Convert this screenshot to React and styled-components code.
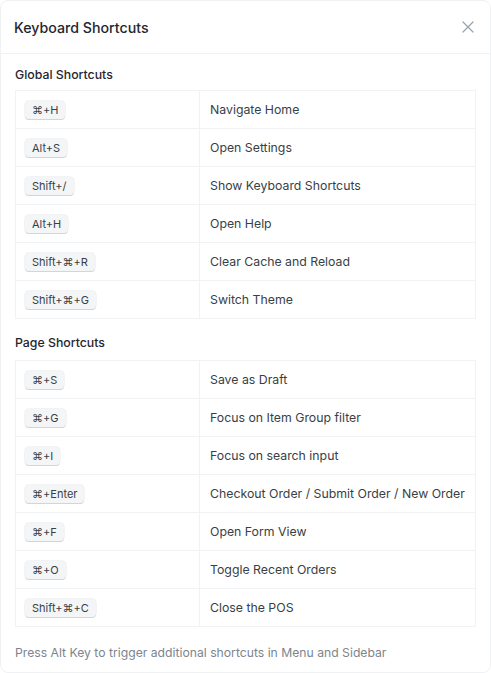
import React from "react";
import styled, { createGlobalStyle } from "styled-components";

const Global = createGlobalStyle`
  body {
    margin: 0;
    background: #ffffff;
    font-family: Inter, "Noto Sans", sans-serif;
    -webkit-font-smoothing: antialiased;
  }
`;

const Modal = styled.div`
  width: 491px;
  height: 673px;
  box-sizing: border-box;
  background: #fff;
  border: 1px solid #f0f1f2;
  border-radius: 8px;
  display: flex;
  flex-direction: column;
`;

const Header = styled.div`
  height: 52px;
  display: flex;
  align-items: center;
  justify-content: space-between;
  padding: 0 14px 0 13px;
  border-bottom: 1px solid #f1f2f3;
`;

const Title = styled.h3`
  margin: 0;
  font-size: 14.2px;
  font-weight: 500;
  color: #1f272e;
`;

const Close = styled.button`
  border: none;
  background: none;
  padding: 0;
  width: 16px;
  height: 16px;
  display: flex;
  align-items: center;
  justify-content: center;
  color: #98a1a9;
  cursor: pointer;
`;

const Body = styled.div`
  padding: 12px 14px 0 14px;
  display: flex;
  flex-direction: column;
`;

const SectionTitle = styled.div`
  font-size: 12.3px;
  font-weight: 500;
  color: #1f272e;
  line-height: 18px;
  margin-bottom: ${(p) => p.gap || 6}px;
  margin-top: ${(p) => p.top || 0}px;
`;

const Table = styled.div`
  border: 1px solid #f1f2f3;
  border-bottom: none;
`;

const Row = styled.div`
  display: grid;
  grid-template-columns: 184px 1fr;
  height: 37px;
  border-bottom: 1px solid #f1f2f3;
`;

const KeyCell = styled.div`
  display: flex;
  align-items: center;
  padding-left: 9px;
  border-right: 1px solid #f1f2f3;
`;

const Kbd = styled.kbd`
  font-family: Inter, "Noto Sans", sans-serif;
  font-size: 11px;
  color: #383f45;
  background: #f4f5f6;
  border-radius: 4px;
  padding: 0 7px;
  height: 18px;
  line-height: 18px;
  box-shadow: 0 1px 0 #d2d6da, 0 0 0 0.5px #e6e8ea;
`;

const Desc = styled.div`
  display: flex;
  align-items: center;
  padding-left: 10px;
  font-size: 12.3px;
  color: #383f45;
`;

const Footer = styled.div`
  margin-top: 17px;
  font-size: 12.2px;
  line-height: 18px;
  color: #7c858d;
`;

const globalShortcuts = [
  ["⌘+H", "Navigate Home"],
  ["Alt+S", "Open Settings"],
  ["Shift+/", "Show Keyboard Shortcuts"],
  ["Alt+H", "Open Help"],
  ["Shift+⌘+R", "Clear Cache and Reload"],
  ["Shift+⌘+G", "Switch Theme"],
];

const pageShortcuts = [
  ["⌘+S", "Save as Draft"],
  ["⌘+G", "Focus on Item Group filter"],
  ["⌘+I", "Focus on search input"],
  ["⌘+Enter", "Checkout Order / Submit Order / New Order"],
  ["⌘+F", "Open Form View"],
  ["⌘+O", "Toggle Recent Orders"],
  ["Shift+⌘+C", "Close the POS"],
];

const ShortcutTable = ({ items }) => (
  <Table>
    {items.map(([keys, label]) => (
      <Row key={label}>
        <KeyCell>
          <Kbd>{keys}</Kbd>
        </KeyCell>
        <Desc>{label}</Desc>
      </Row>
    ))}
  </Table>
);

export default function App() {
  return (
    <>
      <Global />
      <Modal>
        <Header>
          <Title>Keyboard Shortcuts</Title>
          <Close aria-label="Close">
            <svg width="12" height="12" viewBox="0 0 12 12" fill="none">
              <path d="M1 1l10 10M11 1L1 11" stroke="currentColor" strokeWidth="1.2" strokeLinecap="round" />
            </svg>
          </Close>
        </Header>
        <Body>
          <SectionTitle>Global Shortcuts</SectionTitle>
          <ShortcutTable items={globalShortcuts} />
          <SectionTitle top={15} gap={8}>Page Shortcuts</SectionTitle>
          <ShortcutTable items={pageShortcuts} />
          <Footer>Press Alt Key to trigger additional shortcuts in Menu and Sidebar</Footer>
        </Body>
      </Modal>
    </>
  );
}
